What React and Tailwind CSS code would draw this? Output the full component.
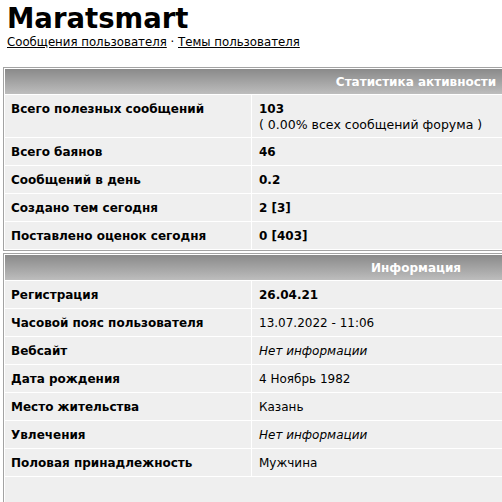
import React from "react";

const stats = [
  { label: "Всего баянов", value: "46" },
  { label: "Сообщений в день", value: "0.2" },
  { label: "Создано тем сегодня", value: "2 [3]" },
  { label: "Поставлено оценок сегодня", value: "0 [403]" },
];

const info = [
  { label: "Регистрация", value: "26.04.21", bold: true },
  { label: "Часовой пояс пользователя", value: "13.07.2022 - 11:06" },
  { label: "Вебсайт", value: "Нет информации", italic: true },
  { label: "Дата рождения", value: "4 Ноябрь 1982" },
  { label: "Место жительства", value: "Казань" },
  { label: "Увлечения", value: "Нет информации", italic: true },
  { label: "Половая принадлежность", value: "Мужчина" },
];

const cell = "bg-[#efefef] px-[6px] flex items-center";

const Header = ({ title }) => (
  <div className="h-[25px] bg-gradient-to-b from-[#8a8a8a] to-[#bdbdbd] text-white font-bold text-[12px] flex items-center justify-center">
    {title}
  </div>
);

const Row = ({ label, children }) => (
  <div className="grid grid-cols-[246px_1fr] gap-px h-[27px]">
    <div className={`${cell} font-bold`}>{label}</div>
    <div className={cell}>{children}</div>
  </div>
);

const App = () => {
  return (
    <div className="w-[502px] h-[502px] overflow-hidden bg-white text-black font-['DejaVu_Sans',Verdana,sans-serif] text-[12px]">
      <div className="px-[7px] pt-[2px]">
        <h1 className="text-[27.5px] font-bold leading-[33px]">Maratsmart</h1>
        <p className="text-[11.75px] leading-[15px]">
          <a href="#" className="underline">Сообщения пользователя</a>
          {" · "}
          <a href="#" className="underline">Темы пользователя</a>
        </p>
      </div>

      <div className="ml-[3px] mt-[17px] w-[826px] border border-[#a3a3a3] bg-white p-px flex flex-col gap-px">
        <Header title="Статистика активности" />
        <div className="grid grid-cols-[246px_1fr] gap-px h-[42px]">
          <div className="bg-[#efefef] px-[6px] pt-[6px] font-bold leading-[16px]">Всего полезных сообщений</div>
          <div className="bg-[#efefef] px-[7px] pt-[6px] flex flex-col">
            <span className="font-bold leading-[16px]">103</span>
            <span className="text-[12.5px] leading-[15px]">( 0.00% всех сообщений форума )</span>
          </div>
        </div>
        {stats.map((s) => (
          <Row key={s.label} label={s.label}>
            <span className="font-bold px-px">{s.value}</span>
          </Row>
        ))}
      </div>

      <div className="ml-[3px] mt-[2px] w-[826px] border border-[#a3a3a3] bg-white p-px flex flex-col gap-px">
        <Header title="Информация" />
        {info.map((s) => (
          <Row key={s.label} label={s.label}>
            <span className={`px-px ${s.bold ? "font-bold" : ""} ${s.italic ? "italic" : ""}`}>{s.value}</span>
          </Row>
        ))}
        <div className="bg-[#efefef] h-[40px]"></div>
      </div>
    </div>
  );
};

export default App;
